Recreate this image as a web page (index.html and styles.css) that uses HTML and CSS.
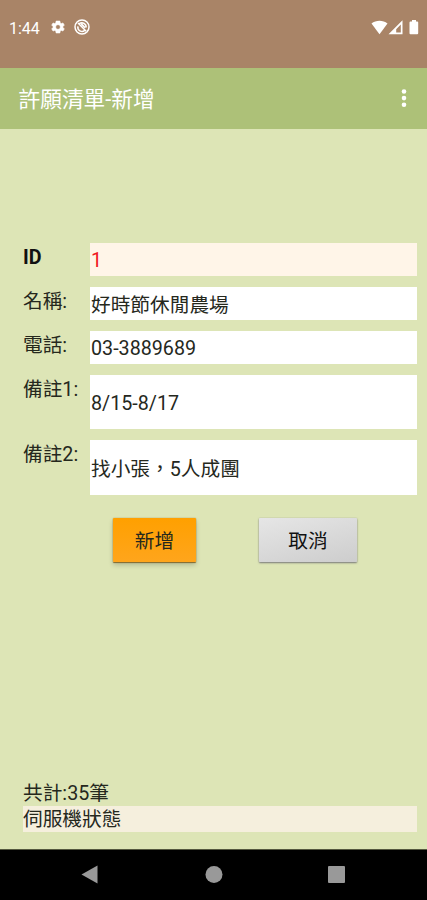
FILE: index.html
```html
<!DOCTYPE html>
<html lang="zh-Hant">
<head>
    <meta charset="UTF-8">
    <meta name="viewport" content="width=device-width, initial-scale=1.0">
    <title>許願清單-新增</title>
    <link rel="stylesheet" href="styles.css">
</head>
<body>
    <div class="status-bar">
        <span class="clock">1:44</span>
        <svg class="icon-gear" width="16" height="16" viewBox="0 0 24 24">
            <path fill="#fff" stroke="#fff" stroke-width=".8" stroke-linejoin="round" fill-rule="evenodd" d="M19.400 13a7.500 7.500 0 0 0 0-2l2.100-1.600-2-3.500-2.500 1a7.500 7.500 0 0 0-1.700-1L14.900 3H9.100l-.4 2.900a7.500 7.500 0 0 0-1.700 1l-2.500-1-2 3.500L4.600 11a7.500 7.500 0 0 0 0 2l-2.100 1.600 2 3.500 2.500-1a7.500 7.500 0 0 0 1.700 1l.4 2.900h5.800l.4-2.900a7.500 7.500 0 0 0 1.700-1l2.500 1 2-3.500zM12 15.500a3.500 3.500 0 1 1 0-7 3.500 3.500 0 0 1 0 7z"/>
        </svg>
        <svg class="icon-sync" width="16" height="16" viewBox="0 0 16 16" fill="none" stroke="#fff">
            <circle cx="8" cy="8" r="7" stroke-width="1.500"/>
            <path stroke-width="1.500" d="M5.300 4.700A4.200 4.200 0 0 1 12.100 8.500M10.700 11.400A4.200 4.200 0 0 1 3.900 7.400M4 4l8.200 8.200M7.300 4.900l3.900 3.900"/>
        </svg>
        <div class="signals">
            <svg width="17" height="15" viewBox="0 0 17 15">
                <path fill="#fff" d="M.5 3.600C5-.1 12-.1 16.500 3.600L8.500 14.300z"/>
            </svg>
            <svg width="15" height="15" viewBox="0 0 15 15">
                <path fill="#fff" fill-rule="evenodd" d="M.5 14.300L14.500.3v14zM8.200 9.200v3.400h4.600V4.600z"/>
            </svg>
            <svg class="icon-battery" width="10" height="15" viewBox="0 0 10 15">
                <path fill="#fff" d="M3 0h4v1.500h1.200q1 0 1 1v10.700q0 1-1 1H1.500q-1 0-1-1V2.500q0-1 1-1H3z"/>
            </svg>
        </div>
    </div>

    <header class="toolbar">
        <h1>許願清單-新增</h1>
        <svg width="6" height="20" viewBox="0 0 6 20" fill="#fff">
            <circle cx="3" cy="3.500" r="2.300"/>
            <circle cx="3" cy="10.100" r="2.300"/>
            <circle cx="3" cy="16.700" r="2.300"/>
        </svg>
    </header>

    <main class="content">
        <div class="form">
            <div class="row">
                <span class="label label-id">ID</span>
                <div class="field field-id">1</div>
            </div>
            <div class="row">
                <span class="label">名稱:</span>
                <div class="field">好時節休閒農場</div>
            </div>
            <div class="row">
                <span class="label">電話:</span>
                <div class="field field-number">03-3889689</div>
            </div>
            <div class="row row-note">
                <span class="label">備註1:</span>
                <div class="field field-number">8/15-8/17</div>
            </div>
            <div class="row row-note">
                <span class="label">備註2:</span>
                <div class="field">找小張，5人成團</div>
            </div>
        </div>
        <div class="buttons">
            <button class="btn-add">新增</button>
            <button class="btn-cancel">取消</button>
        </div>
        <footer class="footer">
            <div class="count">共計:35筆</div>
            <div class="server">伺服機狀態</div>
        </footer>
    </main>

    <nav class="nav-bar">
        <svg width="18" height="20" viewBox="0 0 18 20"><path fill="#999" d="M.5 9.500L16.500.5v18z"/></svg>
        <svg width="18" height="20" viewBox="0 0 18 20"><circle cx="9" cy="9.500" r="8.500" fill="#999"/></svg>
        <svg width="18" height="20" viewBox="0 0 18 20"><rect y="1" width="17" height="17" rx="1" fill="#999"/></svg>
    </nav>
</body>
</html>
```
FILE: styles.css
```css
* {
    box-sizing: border-box;
}
body {
    margin: 0;
    height: 900px;
    display: flex;
    flex-direction: column;
    background: #dde5b6;
    color: #25281d;
    font-family: Roboto, "Noto Sans CJK TC", sans-serif;
    font-size: 19.7px;
}
svg {
    display: block;
    flex: none;
}
.status-bar {
    height: 67.5px;
    padding: 18px 8px 0 9px;
    display: flex;
    align-items: flex-start;
    background: #a98467;
    color: #fff;
}
.clock {
    width: 41px;
    padding-top: 1px;
    font-size: 16px;
    line-height: 20px;
}
.icon-gear {
    margin-top: 1px;
}
.icon-sync {
    margin: 1px 0 0 8px;
}
.signals {
    margin: 2px 0 0 auto;
    display: flex;
}
.icon-battery {
    margin-left: 6px;
}
.toolbar {
    height: 61.5px;
    padding: 0 20px 0 18.5px;
    display: flex;
    align-items: center;
    justify-content: space-between;
    background: #adc178;
    color: #fff;
}
.toolbar h1 {
    margin: 4px 0 0;
    font-size: 21.7px;
    line-height: 32px;
    font-weight: 400;
}
.content {
    flex: 1;
    padding: 114px 10px 17px 23px;
    display: flex;
    flex-direction: column;
}
.form {
    display: flex;
    flex-direction: column;
    gap: 11px;
}
.row {
    height: 33px;
    display: grid;
    grid-template-columns: 67px 1fr;
}
.row-note {
    height: 54.4px;
}
.label {
    line-height: 30px;
    white-space: nowrap;
}
.label-id {
    color: #111;
    font-weight: 700;
}
.field {
    padding-left: 1px;
    display: flex;
    align-items: center;
    background: #fff;
}
.field-number {
    padding-top: 2px;
}
.field-id {
    padding-top: 2px;
    background: #fff5e8;
    color: #f01822;
}
.buttons {
    margin: 23px 0 0 90px;
    display: flex;
    gap: 63px;
}
.buttons button {
    height: 44px;
    padding: 0 0 1px;
    border: 0;
    border-radius: 1px;
    color: #25281d;
    font: inherit;
}
.buttons .btn-add {
    width: 83px;
    background: linear-gradient(#ffa000, #ffa51c);
    box-shadow: 0 0 1px #8a6a20, 0 1px 1px #806a30, 0 3px 5px rgba(0, 0, 0, 0.2);
}
.buttons .btn-cancel {
    width: 98px;
    background: linear-gradient(165deg, #e6e6e6, #cdcdcd);
    box-shadow: 0 0 1px #999, 0 1px 2px #777;
    color: #111;
}
.footer {
    margin-top: auto;
    line-height: 26px;
}
.count,
.server {
    height: 26px;
    line-height: 28px;
}
.server {
    background: #f5efdd;
}
.nav-bar {
    height: 51px;
    padding: 0 81px;
    display: flex;
    align-items: center;
    justify-content: space-between;
    background: #000;
    border-top: 1px solid #54583f;
}
```
